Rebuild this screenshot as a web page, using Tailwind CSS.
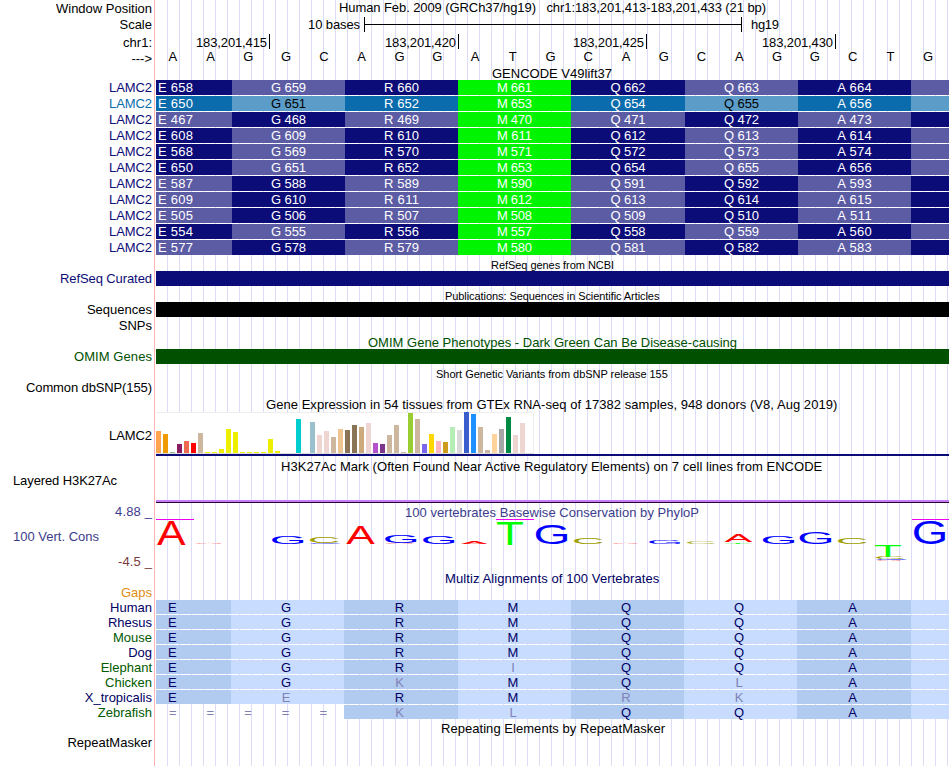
<!DOCTYPE html>
<html lang="en">
<head>
<meta charset="utf-8">
<title>Genome tracks chr1:183,201,413-183,201,433</title>
<script src="https://cdn.jsdelivr.net/npm/@tailwindcss/browser@4"></script>
</head>
<body class="bg-white">
<main class="relative w-[950px] h-[766px] overflow-hidden bg-white font-['Liberation_Sans',Arial,sans-serif] text-[13px] leading-[15px] text-black">
  <svg class="absolute inset-0" width="950" height="766" shape-rendering="crispEdges" aria-hidden="true">
    <defs><pattern id="guides" x="167" y="0" width="12" height="766" patternUnits="userSpaceOnUse"><rect width="1" height="766" fill="#dcdcf8"/></pattern></defs>
    <rect x="156" width="793" height="766" fill="url(#guides)"/>
    <rect x="154" width="1" height="766" fill="#ffb4b4"/>
  </svg>
  <div id="tracks" class="relative flex flex-col w-[949px] whitespace-pre"></div>
</main>
<script>
const out = [];
const ctx = document.createElement('canvas').getContext('2d');
// A caption whose letters are spread over exactly w pixels.
const fit = (text, w, small = false) => {
  if (!w) return `<span>${text}</span>`;
  ctx.font = `${small ? 11 : 13}px "Liberation Sans"`;
  const s = ((w - ctx.measureText(text).width) / (text.length - 1)).toFixed(3);
  return `<span class="inline-block ${small ? 'text-[11px]' : ''}" style="letter-spacing:${s}px;margin-right:${-s}px">${text}</span>`;
};
// One horizontal band: a label column and a 793px data column.
const band = (h, label, color, body, pad = 0, w = 0) => out.push(
  `<div class="flex shrink-0" style="height:${h}px"><div class="w-[156px] shrink-0 pr-[4px] text-right" style="color:${color};padding-top:${pad}px">${fit(label, w)}</div><div class="relative w-[793px] shrink-0">${body}</div></div>`);
const gap = h => out.push(`<div class="shrink-0" style="height:${h}px"></div>`);
const title = (text, x0, x1, color = '#000', small = false) =>
  `<div style="padding-left:${x0 - 156}px;color:${color}">${fit(text, x1 - x0, small)}</div>`;
const bar = c => `<div class="h-[15px]" style="background:${c}"></div>`;
const bases = 'AAGGCAGGATGCAGCAGGCTG'.split('');

band(17, 'Window Position', '#000', title('Human Feb. 2009 (GRCh37/hg19)   chr1:183,201,413-183,201,433 (21 bp)', 339, 766), 1, 96);
band(17, 'Scale', '#000', `<div class="flex h-[15px]"><div class="w-[208px] pr-[4px] text-right">${fit('10 bases', 52)}</div><div class="w-[378px] border-x border-black flex items-center"><div class="h-px w-full bg-black"></div></div><div class="pl-[9px]">${fit('hg19', 28)}</div></div>`, 0);
band(15, 'chr1:', '#000', `<div class="flex">${[[415,114],[420,189],[425,188],[430,189]].map(([n, w]) => `<div class="h-[15px] border-r border-black text-right pr-[2px] pt-px" style="width:${w}px">${fit('183,201,' + n, 71)}</div>`).join('')}</div>`, 1);
band(17, '--->', '#000', `<div class="grid grid-cols-21 -ml-[2px] w-[793px] text-center">${bases.map(b => `<span>${b}</span>`).join('')}</div>`, 2);
band(14, '', '', title('GENCODE V49lift37', 492, 612));

const NAVY = '#0c0c78', VIOLET = '#5c5ca4';
const codonW = [76, 113, 113, 113, 114, 113, 113, 38];
[[658,0],[650,0,1],[467,1],[608,0],[568,0],[650,0],[587,1],[609,1],[505,1],[554,0],[577,1]].forEach(([n, flip, sel]) => {
  const pair = sel ? ['#0a6cac', '#5c9cc8'] : [NAVY, VIOLET];
  const cells = codonW.map((w, i) => {
    const odd = (i + flip) % 2;
    const bg = i === 3 ? '#00f400' : pair[odd];
    const fg = sel && i !== 3 && odd ? '#000' : '#fff';
    return `<div class="${i ? 'text-center' : 'pl-[2px]'}" style="width:${w}px;background:${bg};color:${fg}">${i < 7 ? fit('EGRMQQA'[i] + ' ' + (n + i), 35) : ''}</div>`;
  }).join('');
  band(16, 'LAMC2', sel ? '#0a6cac' : NAVY, `<div class="flex h-[15px]">${cells}</div>`, 0, 43);
});
gap(1);
band(14, '', '', title('RefSeq genes from NCBI', 491, 614, '#000', true));
band(15, 'RefSeq Curated', NAVY, bar(NAVY), 0, 92);
gap(2);
band(14, '', '', title('Publications: Sequences in Scientific Articles', 445, 660, '#000', true));
band(16, 'Sequences', '#000', bar('#000'));
band(17, 'SNPs', '#000', '');
band(14, '', '', title('OMIM Gene Phenotypes - Dark Green Can Be Disease-causing', 368, 737, '#005000'));
band(15, 'OMIM Genes', '#005000', bar('#005000'), 0, 78);
gap(2);
band(14, '', '', title('Short Genetic Variants from dbSNP release 155', 436, 668, '#000', true));
band(17, 'Common dbSNP(155)', '#000', '', 0, 126);
band(15, '', '', title('Gene Expression in 54 tissues from GTEx RNA-seq of 17382 samples, 948 donors (V8, Aug 2019)', 266, 838));

// Tissue bars: [top, colour]; null leaves the slot empty.
const T = '#cdb79e', Y = '#eeee00', P = '#eed5d2';
const tissues = [[431,'#ffa54f'],[434,'#ee9a00'],[452,'#8fbc8f'],[444,'#8b1c62'],[441,'#ee6a50'],[443,'#ff0000'],[433,T],[452,Y],[452,Y],[449,Y],[429,Y],[432,Y],[452,Y],[452,Y],[452,Y],[452,Y],[439,Y],[451,Y],null,null,[419,'#00cdcd'],null,[422,'#9ac0cd'],[435,P],[431,P],[437,T],[429,'#eec591'],[430,'#8b7355'],[425,'#8b7355'],[427,'#cdaa7d'],[423,P],[443,'#b452cd'],[444,'#7a378b'],[435,T],[425,T],[452,T],[413,'#9acd32'],[419,T],[444,'#7a67ee'],[434,'#ffd700'],[441,'#ffb6c1'],[442,'#cd9b1d'],[427,'#b4eeb4'],[430,'#d9d9d9'],[412,'#3a5fcd'],[414,'#1e90ff'],[427,T],[450,T],[434,'#ffd39b'],[429,'#a6a6a6'],[417,'#008b45'],[435,P],[423,P],null];
band(47, 'LAMC2', '#000', `<div class="h-[42px] w-[378px] bg-white border-t border-r border-b border-t-[#eeeeee] border-r-[#eeeeee] border-b-[#dddddd] flex items-end gap-[2px]">${tissues.map(t => `<div class="w-[5px] shrink-0" style="height:${t ? 453 - t[0] : 0}px;background:${t ? t[1] : 'none'}"></div>`).join('')}</div><div class="h-[2px] bg-[#0c0c78]"></div>`, 16, 43);
band(14, '', '', title('H3K27Ac Mark (Often Found Near Active Regulatory Elements) on 7 cell lines from ENCODE', 281, 823));
out.push(`<div class="flex h-[32px]"><div class="w-[156px] shrink-0 pl-[13px]">${fit('Layered H3K27Ac', 104)}</div><div class="w-[793px] pt-[27px]"><div class="h-[2px] bg-[#c87cfa]"></div><div class="h-px bg-[#280032]"></div></div></div>`);

// Sequence logo letters: [char, colour, x0, x1, y0, y1, opacity]
const R = '#ff0000', B = '#0000ff', G = '#00ff00', C = '#a0a000';
const logo = [['A',R,157,185.7,521.3,545],['A',R,195,223,542.7,544],['G',B,272,303.3,535.8,543.8],['C',C,310,339,536.8,543],['G',B,310,340,542.8,544,.8],['A',R,346.3,375,526,543.8],['G',B,385,416.3,535.8,543.2],['A',R,385,415,542.8,544],['G',B,423,454.3,535.8,543.9],['A',R,461,488,541,543.8],['T',G,497,523,521.2,545],['G',B,536,567.4,525,544],['C',C,574,603,538,543.9],['A',R,612,639,542.7,544],['G',B,649,680,540,543.9],['C',C,687,715.4,541.9,543.9,.8],['A',R,724.4,752.4,534,542],['T',G,725,751,541.9,543.6,.8],['G',B,763,794.4,536,544],['G',B,799.6,831.3,532,544],['C',C,838,867,537,544],['T',G,875,901,546,557],['C',C,876,904,557,559.3],['G',B,876,906.6,559,560.1],['A',R,876.6,902.4,559.9,561],['G',B,914,945,521,544]];
ctx.font = '100px "Liberation Sans"';
const glyphs = logo.map(([ch, c, x0, x1, y0, y1, o = 1]) => {
  const m = ctx.measureText(ch), l = m.actualBoundingBoxLeft, a = m.actualBoundingBoxAscent;
  const sx = (x1 - x0) / (l + m.actualBoundingBoxRight), sy = (y1 - y0) / (a + m.actualBoundingBoxDescent);
  return `<text font-size="100" fill="${c}" opacity="${o}" transform="translate(${x0 - 156} ${y0 - 505}) scale(${sx} ${sy}) translate(${l} ${a})">${ch}</text>`;
}).join('');
out.push(`<div class="flex h-[66px]"><div class="w-[156px] shrink-0 flex flex-col justify-between pb-[2px] pr-[4px] text-[#3c3c8c]"><div class="text-right -mt-px">${fit('4.88 _', 37)}</div><div class="pl-[13px]">${fit('100 Vert. Cons', 86)}</div><div class="text-right text-[#783c3c]">${fit('-4.5 _', 34)}</div></div><div class="w-[793px] shrink-0">${title('100 vertebrates Basewise Conservation by PhyloP', 405, 699, '#3c3c8c')}<svg class="block -mt-[15px]" width="793" height="60"><g fill="#f000f0" shape-rendering="crispEdges"><rect y="14" width="38" height="1"/><rect x="340" y="14" width="38" height="1"/><rect x="756" y="14" width="37" height="1"/></g>${glyphs}</svg></div></div>`);
band(14, '', '', title('Multiz Alignments of 100 Vertebrates', 445, 660, '#000064'));
band(15, 'Gaps', '#e08c14', '');

const alignW = [75, 113, 114, 113, 113, 113, 114, 38];
const DB = '#000064', DG = '#005a00';
[['Human',DB,'EGRMQQA'],['Rhesus',DB,'EGRMQQA'],['Mouse',DG,'EGRMQQA'],['Dog',DB,'EGRMQQA'],['Elephant',DG,'EGRiQQA'],['Chicken',DG,'EGkMQlA'],['X_tropicalis',DB,'EeRMrkA'],['Zebrafish',DG,'  klQQA']].forEach(([name, color, seq]) => {
  const fish = name === 'Zebrafish';
  const cells = alignW.map((w, i) => {
    if (fish && i < 2) return i ? '' : `<div class="w-[188px] grid grid-cols-5 -ml-[2px] mr-[2px] text-center text-[#8080b4]">${'====='.split('').map(e => `<span>${e}</span>`).join('')}</div>`;
    const ch = seq[i] || '', low = ch !== ch.toUpperCase();
    return `<div class="h-[14px] ${i ? 'text-center pr-[3px]' : 'pl-[12px]'}" style="width:${w}px;background:${i % 2 ? '#c8dcff' : '#b0caf0'};color:${low ? '#8282b4' : '#000064'}">${ch.toUpperCase()}</div>`;
  }).join('');
  band(15, name, color, `<div class="flex h-[14px]">${cells}</div>`);
});
gap(1);
band(14, '', '', title('Repeating Elements by RepeatMasker', 441, 665));
band(16, 'RepeatMasker', '#000', '');
document.getElementById('tracks').innerHTML = out.join('');
</script>
</body>
</html>
